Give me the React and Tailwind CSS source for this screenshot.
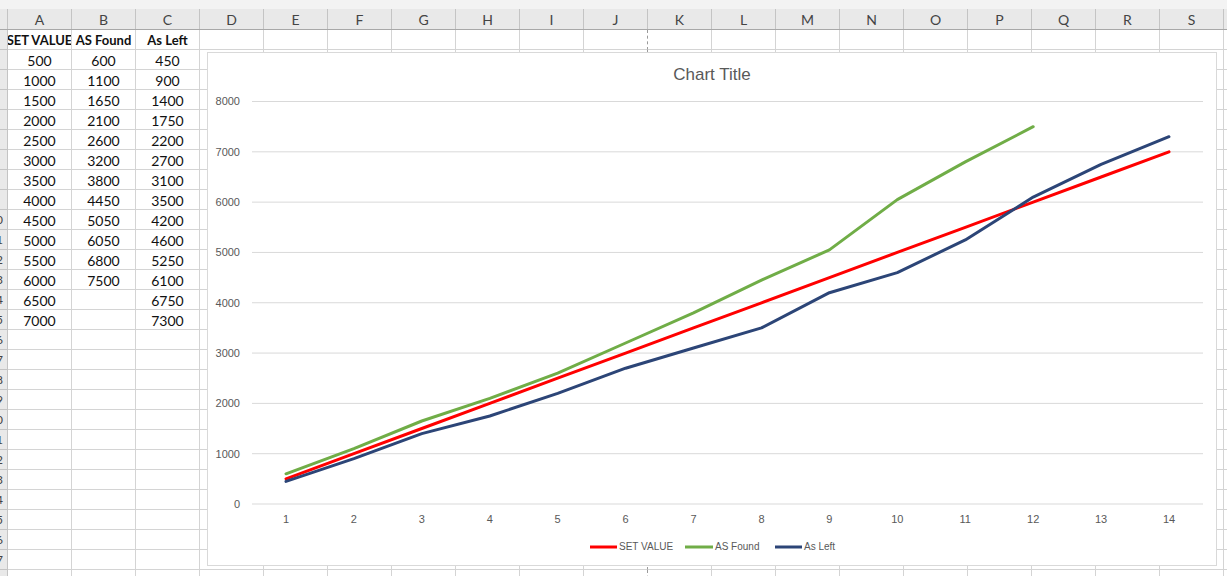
import React from 'react'

const COLS = ['A', 'B', 'C', 'D', 'E', 'F', 'G', 'H', 'I', 'J', 'K', 'L', 'M', 'N', 'O', 'P', 'Q', 'R', 'S', 'T']

const setValue = [500, 1000, 1500, 2000, 2500, 3000, 3500, 4000, 4500, 5000, 5500, 6000, 6500, 7000]
const asFound = [600, 1100, 1650, 2100, 2600, 3200, 3800, 4450, 5050, 6050, 6800, 7500]
const asLeft = [450, 900, 1400, 1750, 2200, 2700, 3100, 3500, 4200, 4600, 5250, 6100, 6750, 7300]

const rows = []
rows.push(['SET VALUE', 'AS Found', 'As Left'])
for (let i = 0; i < 27; i++) {
  rows.push([setValue[i] ?? '', asFound[i] ?? '', asLeft[i] ?? ''])
}

// plot geometry, relative to chart box
const X0 = 45
const X1 = 996
const Y0 = 452
const Y8K = 49.5
const step = (X1 - X0) / 14
const cx = (i) => X0 + (i + 0.5) * step
const cy = (v) => Y0 - (v / 8000) * (Y0 - Y8K)
const pts = (arr) => arr.map((v, i) => `${cx(i).toFixed(1)},${cy(v).toFixed(1)}`).join(' ')

const Chart = () => {
  return (
    <div className="absolute left-[207px] top-[52px] w-[1010px] h-[514px] bg-white border border-[#d9d9d9]">
      <svg width="1010" height="514" className="absolute -left-px -top-px" style={{ fontFamily: '"Liberation Sans", Arial, sans-serif' }}>
        <text x="505" y="24" textAnchor="middle" dominantBaseline="middle" fontSize="17" fill="#595959">Chart Title</text>

        {/* gridlines + y labels */}
        {[0, 1000, 2000, 3000, 4000, 5000, 6000, 7000, 8000].map((v) => (
          <g key={v}>
            <line x1={X0} x2={X1} y1={cy(v)} y2={cy(v)} stroke="#d9d9d9" strokeWidth="1" />
            <text x="33" y={cy(v) + 1} textAnchor="end" dominantBaseline="middle" fontSize="11" fill="#595959">{v}</text>
          </g>
        ))}

        {/* x labels */}
        {setValue.map((_, i) => (
          <text key={i} x={cx(i)} y="468" textAnchor="middle" dominantBaseline="middle" fontSize="11" fill="#595959">{i + 1}</text>
        ))}

        <polyline points={pts(setValue)} fill="none" stroke="#ff0000" strokeWidth="3" strokeLinejoin="round" strokeLinecap="round" />
        <polyline points={pts(asFound)} fill="none" stroke="#70ad47" strokeWidth="3" strokeLinejoin="round" strokeLinecap="round" />
        <polyline points={pts(asLeft)} fill="none" stroke="#2c4577" strokeWidth="3" strokeLinejoin="round" strokeLinecap="round" />

        {/* legend */}
        <line x1="383" x2="410" y1="495" y2="495" stroke="#ff0000" strokeWidth="3" />
        <text x="412" y="495" dominantBaseline="middle" fontSize="10" fill="#595959">SET VALUE</text>
        <line x1="478" x2="506" y1="495" y2="495" stroke="#70ad47" strokeWidth="3" />
        <text x="508" y="495" dominantBaseline="middle" fontSize="10" fill="#595959">AS Found</text>
        <line x1="568" x2="595" y1="495" y2="495" stroke="#2c4577" strokeWidth="3" />
        <text x="597" y="495" dominantBaseline="middle" fontSize="10" fill="#595959">As Left</text>
      </svg>
    </div>
  )
}

export default function App() {
  return (
    <div className="relative w-[1227px] h-[576px] overflow-hidden bg-white text-[#111] font-['Lato',sans-serif]">
      <div className="h-[9px] bg-[#f3f3f3]" />

      {/* column headers */}
      <div className="flex h-[21px] bg-[#e9e9e9] border-b border-[#a8a8a8]">
        <div className="w-[8px] shrink-0 border-r border-[#c4c4c4]" />
        {COLS.map((c) => (
          <div key={c} className="w-[64px] shrink-0 border-r border-[#c4c4c4] flex items-center justify-center text-[14px] text-[#444]">
            {c}
          </div>
        ))}
      </div>

      {/* rows */}
      {rows.map((r, ri) => (
        <div key={ri} className="flex h-[20px]">
          <div className="w-[8px] shrink-0 overflow-hidden bg-[#e9e9e9] border-r border-b border-[#c4c4c4] flex items-center">
            <div className="w-[24px] -ml-[16px] shrink-0 text-center text-[12px] text-[#444] leading-none">{ri + 1}</div>
          </div>
          {COLS.map((c, ci) => (
            <div
              key={c}
              className={
                'w-[64px] shrink-0 border-r border-b border-[#d4d4d4] flex items-center justify-center overflow-hidden whitespace-nowrap leading-none pt-[2px] ' +
                (ri === 0 ? 'font-bold text-[13px] ' : 'text-[14px] ') +
                (c === 'J' ? '[border-right-style:dashed] border-r-[#9a9a9a]' : '')
              }
            >
              {ci < 3 ? r[ci] : ''}
            </div>
          ))}
        </div>
      ))}

      <Chart />
    </div>
  )
}
